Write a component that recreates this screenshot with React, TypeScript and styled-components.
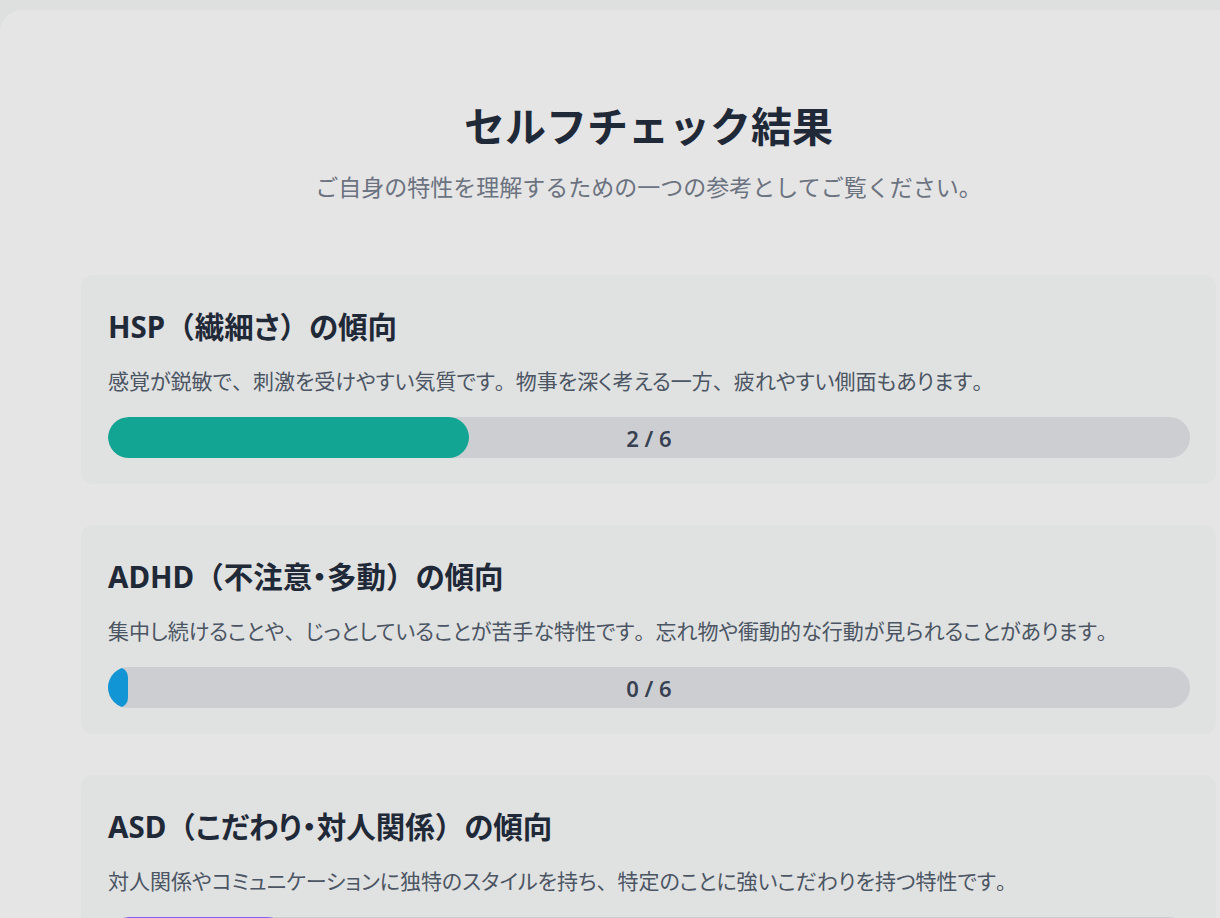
import React from "react";
import styled, { createGlobalStyle } from "styled-components";

const GlobalStyle = createGlobalStyle`
  html, body {
    margin: 0;
    padding: 0;
    background: #dedfdf;
    overflow: hidden;
  }
  body {
    font-family: "Noto Sans", "Noto Sans CJK JP", sans-serif;
  }
`;

const Page = styled.div`
  padding-top: 10px;
  width: 1400px;
`;

const Sheet = styled.main`
  width: 1297px;
  box-sizing: border-box;
  background: #e5e5e5;
  border-radius: 22px 22px 0 0;
  padding: 85px 81px 60px;
  display: flex;
  flex-direction: column;
`;

const Header = styled.header`
  text-align: center;
  margin-bottom: 70px;
`;

const Title = styled.h1`
  margin: 0;
  font-size: 41px;
  line-height: 62px;
  font-weight: 700;
  color: #1f2937;
`;

const Subtitle = styled.p`
  margin: 12px 0 0;
  font-size: 23px;
  line-height: 36px;
  font-weight: 400;
  color: #6b7280;
`;

const List = styled.section`
  display: flex;
  flex-direction: column;
  gap: 41px;
`;

const Card = styled.article`
  background: #e0e1e1;
  border-radius: 12px;
  padding: 31px 26px 26px 27px;
`;

const CardTitle = styled.h2`
  margin: 0;
  font-size: 29.5px;
  line-height: 42px;
  font-weight: 700;
  color: #1f2937;
  font-feature-settings: "palt";
`;

const FullWidth = styled.span`
  font-feature-settings: normal;
`;

const Description = styled.p`
  margin: 16px 0 0;
  font-size: 21px;
  line-height: 34px;
  color: #4b5563;
  font-feature-settings: "palt";
`;

const Track = styled.div`
  position: relative;
  margin-top: 19px;
  height: 41px;
  border-radius: 999px;
  background: #cdced1;
  overflow: hidden;
`;

const Fill = styled.div<{ $color: string }>`
  height: 100%;
  min-width: 20px;
  border-radius: 999px;
  background: ${(p) => p.$color};
`;

const Label = styled.span`
  position: absolute;
  inset: 0;
  display: flex;
  align-items: center;
  justify-content: center;
  font-size: 22px;
  font-weight: 600;
  color: #374151;
`;

type Item = {
  title: string;
  desc: string;
  score: number;
  max: number;
  color: string;
};

const items: Item[] = [
  {
    title: "HSP（繊細さ）の傾向",
    desc: "感覚が鋭敏で、刺激を受けやすい気質です。物事を深く考える一方、疲れやすい側面もあります。",
    score: 2,
    max: 6,
    color: "#13a594",
  },
  {
    title: "ADHD（不注意・多動）の傾向",
    desc: "集中し続けることや、じっとしていることが苦手な特性です。忘れ物や衝動的な行動が見られることがあります。",
    score: 0,
    max: 6,
    color: "#1295d5",
  },
  {
    title: "ASD（こだわり・対人関係）の傾向",
    desc: "対人関係やコミュニケーションに独特のスタイルを持ち、特定のことに強いこだわりを持つ特性です。",
    score: 1,
    max: 6,
    color: "#8b5cf6",
  },
];

// Keep brackets and punctuation full width while kana use proportional widths.
function typeset(text: string) {
  const parts = text.split(/([（）、。])/);
  return parts.map((p, i) =>
    /^[（）、。]$/.test(p) ? <FullWidth key={i}>{p}</FullWidth> : <React.Fragment key={i}>{p}</React.Fragment>
  );
}

export default function App() {
  return (
    <>
      <GlobalStyle />
      <Page>
        <Sheet>
          <Header>
            <Title>セルフチェック結果</Title>
            <Subtitle>ご自身の特性を理解するための一つの参考としてご覧ください。</Subtitle>
          </Header>
          <List>
            {items.map((it) => (
              <Card key={it.title}>
                <CardTitle>{typeset(it.title)}</CardTitle>
                <Description>{typeset(it.desc)}</Description>
                <Track>
                  <Fill $color={it.color} style={{ width: `${(it.score / it.max) * 100}%` }} />
                  <Label>
                    {it.score} / {it.max}
                  </Label>
                </Track>
              </Card>
            ))}
          </List>
        </Sheet>
      </Page>
    </>
  );
}
